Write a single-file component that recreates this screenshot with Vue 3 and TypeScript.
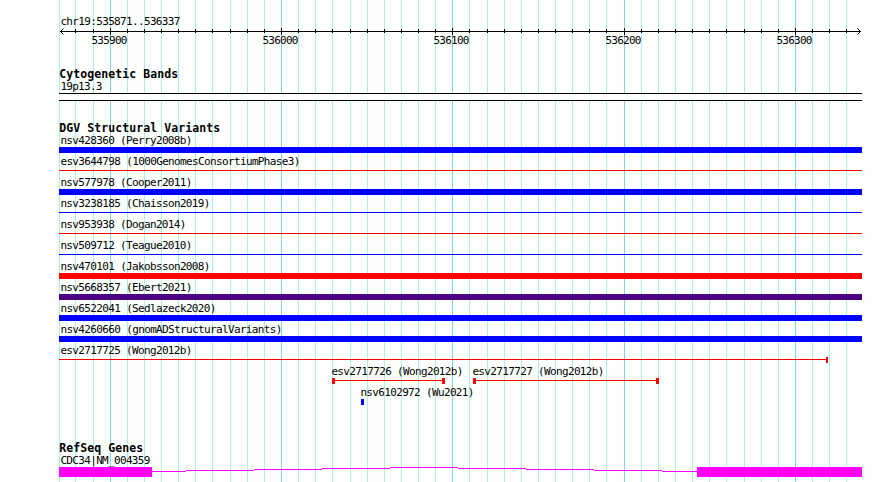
<script setup lang="ts">
interface Span {
  start: number
  end: number
  color: string
  kind: 'bar' | 'line' | 'capped' | 'open'
  label: string
  labelX: number
}

const left = 59
const right = 862
const gridLines: number[] = [
  59, 75, 93, 110, 127, 144, 161, 178, 195, 212, 230, 247, 264, 281, 298, 315,
  332, 350, 367, 384, 401, 418, 435, 452, 469, 487, 504, 521, 538, 555, 572,
  589, 606, 624, 641, 658, 675, 692, 709, 726, 744, 761, 778, 795, 812, 829, 846,
]
const majors: Record<number, string> = {
  110: '535900',
  281: '536000',
  452: '536100',
  624: '536200',
  795: '536300',
}

const full = (label: string, color: string, kind: Span['kind']): Span => ({
  start: left,
  end: right,
  color,
  kind,
  label,
  labelX: 60.4,
})

const rows: Span[][] = [
  [full('nsv428360 (Perry2008b)', '#0000ff', 'bar')],
  [full('esv3644798 (1000GenomesConsortiumPhase3)', '#ff0000', 'line')],
  [full('nsv577978 (Cooper2011)', '#0000ff', 'bar')],
  [full('nsv3238185 (Chaisson2019)', '#0000ff', 'line')],
  [full('nsv953938 (Dogan2014)', '#ee0000', 'line')],
  [full('nsv509712 (Teague2010)', '#0000ff', 'line')],
  [full('nsv470101 (Jakobsson2008)', '#ff0000', 'bar')],
  [full('nsv5668357 (Ebert2021)', '#4b0082', 'bar')],
  [full('nsv6522041 (Sedlazeck2020)', '#0000ff', 'bar')],
  [full('nsv4260660 (gnomADStructuralVariants)', '#0000ff', 'bar')],
  [{ start: 59, end: 828, color: '#f60008', kind: 'open', label: 'esv2717725 (Wong2012b)', labelX: 60.4 }],
  [
    { start: 332, end: 445, color: '#ff0000', kind: 'capped', label: 'esv2717726 (Wong2012b)', labelX: 331.4 },
    { start: 473, end: 659, color: '#ff0000', kind: 'capped', label: 'esv2717727 (Wong2012b)', labelX: 472.4 },
  ],
  [{ start: 361, end: 364, color: '#0000ff', kind: 'bar', label: 'nsv6102972 (Wu2021)', labelX: 360.4 }],
]

// Each intron step: x start, x end, y inside the gene track
const intron: [number, number, number][] = [
  [152, 186, 31],
  [186, 254, 30],
  [254, 322, 29],
  [322, 390, 28],
  [390, 458, 27],
  [458, 526, 28],
  [526, 594, 29],
  [594, 662, 30],
  [662, 697, 31],
]
</script>

<template>
  <main class="browser">
    <svg class="grid" width="890" height="482" shape-rendering="crispEdges" aria-hidden="true">
      <rect
        v-for="x in gridLines"
        :key="x"
        :x="x"
        y="0"
        width="1"
        height="482"
        :class="x in majors ? 'major' : 'minor'"
      />
    </svg>

    <svg class="track ruler" width="890" height="64">
      <text class="label" x="60.4" y="25" textLength="120">chr19:535871..536337</text>
      <g shape-rendering="crispEdges">
        <rect x="60" y="31" width="801" height="1" />
        <rect
          v-for="x in gridLines.slice(1)"
          :key="x"
          :x="x"
          :y="x in majors ? 28 : 29"
          width="1"
          :height="x in majors ? 7 : 4"
        />
      </g>
      <path class="arrow" d="M63.5 28.5 60.5 31.5 63.5 34.5M857.5 28.5 860.5 31.5 857.5 34.5" />
      <text
        v-for="(name, x) in majors"
        :key="name"
        class="label"
        :x="Number(x) - 18.6"
        y="44"
        textLength="36"
      >{{ name }}</text>
    </svg>

    <svg class="track" width="890" height="54">
      <text class="title" x="59.3" y="14" textLength="119">Cytogenetic Bands</text>
      <text class="label" x="60.4" y="26" textLength="42">19p13.3</text>
      <g shape-rendering="crispEdges">
        <rect class="band" x="59" y="29" width="803" height="8" />
        <rect x="59" y="29" width="803" height="1" />
        <rect x="59" y="36" width="803" height="1" />
      </g>
    </svg>

    <section class="variants">
      <svg class="track" width="890" height="17">
        <text class="title" x="59.3" y="14" textLength="161">DGV Structural Variants</text>
      </svg>
      <svg v-for="(row, i) in rows" :key="i" class="track" width="890" height="21">
        <g v-for="s in row" :key="s.label">
          <text class="label" :x="s.labelX" y="9" :textLength="s.label.length * 6">{{ s.label }}</text>
          <g :fill="s.color" shape-rendering="crispEdges">
            <rect
              :x="s.start"
              :y="s.kind === 'bar' ? 12 : 14"
              :width="s.end - s.start"
              :height="s.kind === 'bar' ? 6 : 1"
            />
            <rect v-if="s.kind === 'capped'" :x="s.start" y="12" width="3" height="6" />
            <rect v-if="s.kind === 'capped'" :x="s.end - 3" y="12" width="3" height="6" />
            <rect v-if="s.kind === 'open'" :x="s.end - 2" y="12" width="2" height="6" />
          </g>
        </g>
      </svg>
    </section>

    <svg class="track" width="890" height="42">
      <text class="title" x="59.3" y="12" textLength="84">RefSeq Genes</text>
      <text class="label" x="60.4" y="24" textLength="90">CDC34|NM_004359</text>
      <g class="gene" shape-rendering="crispEdges">
        <rect x="59" y="27" width="93" height="10" />
        <rect v-for="[a, b, y] in intron" :key="a" :x="a" :y="y" :width="b - a" height="1" />
        <rect x="697" y="27" width="165" height="10" />
      </g>
    </svg>
  </main>
</template>

<style>
body {
  background: #fdfffc;
}
</style>

<style scoped>
.browser {
  position: relative;
  display: flex;
  flex-direction: column;
  width: 890px;
  height: 482px;
  overflow: hidden;
  background: #fdfffc;
}
.grid {
  position: absolute;
  inset: 0;
}
.minor {
  fill: #afeeee;
}
.major {
  fill: #87ceeb;
}
.track {
  position: relative;
  display: block;
  flex: none;
  overflow: visible;
}
.variants {
  display: flex;
  flex-direction: column;
  height: 322px;
}
.label {
  font: 11px 'DejaVu Sans Mono', monospace;
}
.title {
  font: bold 11.5px 'DejaVu Sans Mono', monospace;
}
.arrow {
  fill: none;
  stroke: #000;
}
.band {
  fill: #fdfffc;
}
.gene {
  fill: #ff00ff;
}
</style>
